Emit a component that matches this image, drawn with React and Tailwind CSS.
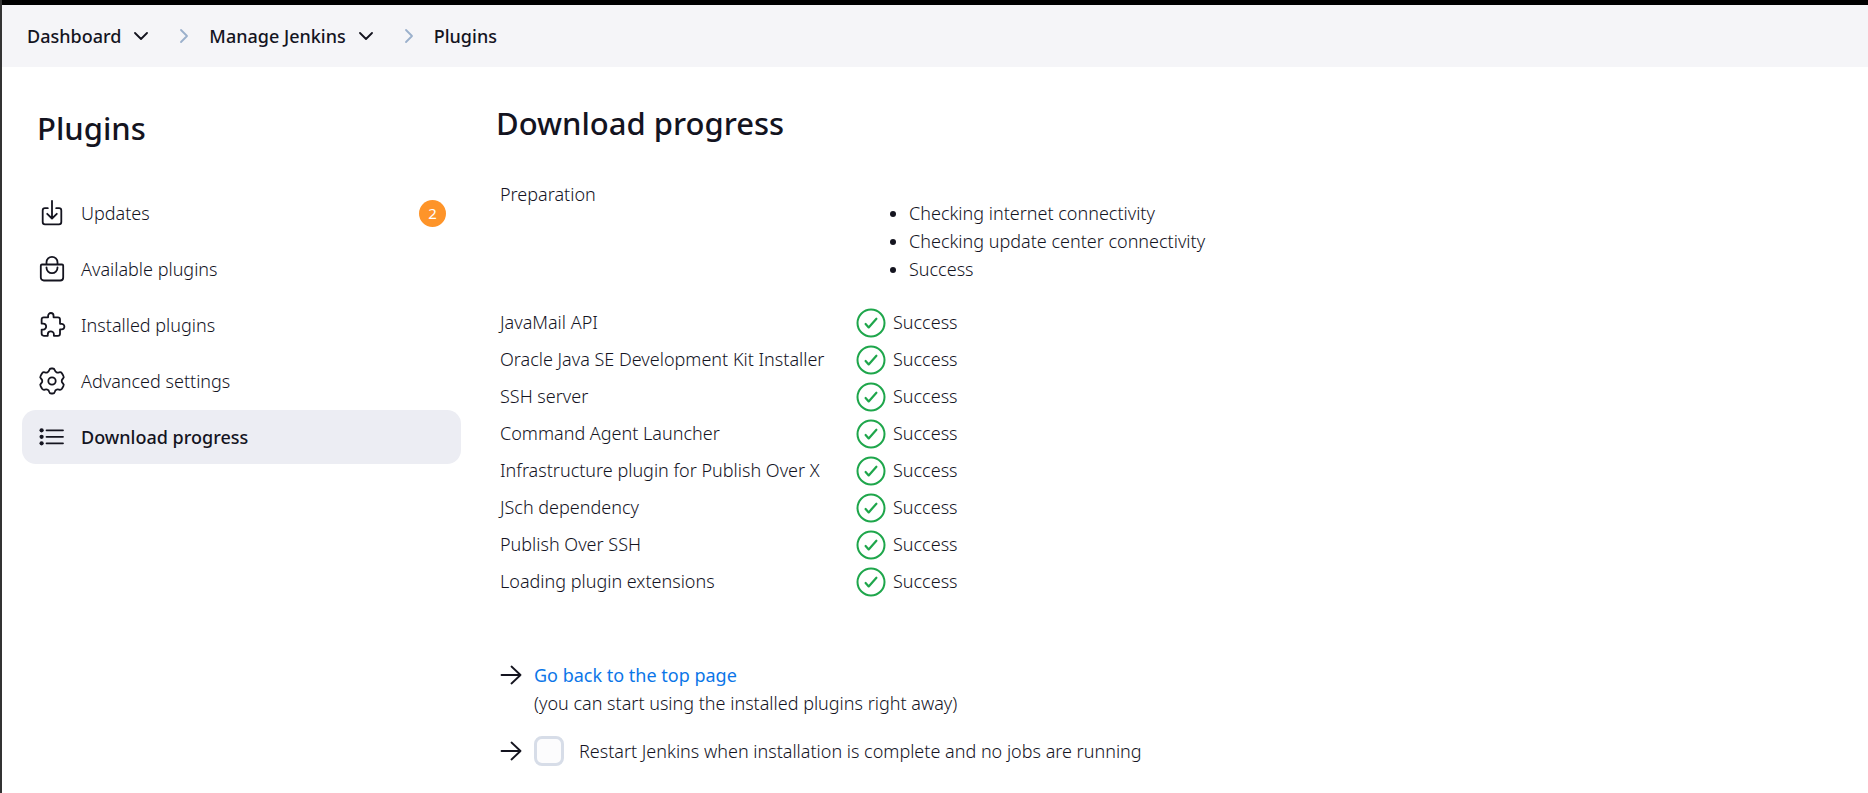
import React from "react";

const stroke = {
  fill: "none",
  stroke: "currentColor",
  strokeLinecap: "round",
  strokeLinejoin: "round",
};

const icons = {
  updates: (
    <path d="M18.200 9.200H21a2.300 2.300 0 012.300 2.300V23a2.300 2.300 0 01-2.300 2.300H7A2.300 2.300 0 014.700 23V11.500A2.300 2.300 0 017 9.200h2.800M9.200 14.800L14 19.500l4.800-4.700M14 1.800V19" />
  ),
  available: (
    <>
      <path d="M4 9.500H24a1.200 1.200 0 011.200 1.200V22.500a3 3 0 01-3 3H5.800a3 3 0 01-3-3V10.700A1.200 1.200 0 014 9.500zM8.500 9.500V7.300a5.500 5.500 0 0111 0V9.500" />
      <path d="M8.500 12.300v.4a5.500 5.500 0 0011 0v-.4" />
    </>
  ),
  installed: (
    <path
      transform="translate(1 -.6) scale(.0547)"
      strokeWidth={33}
      d="M413.660 246.100H386a2 2 0 01-2-2v-77.240A38.860 38.860 0 00345.140 128H267.900a2 2 0 01-2-2V98.340c0-27.140-21.500-49.860-48.640-50.330a49.530 49.530 0 00-50.400 49.510V126a2 2 0 01-2 2H87.620A39.740 39.740 0 0048 167.620V238a2 2 0 002 2h26.910c29.370 0 53.680 25.480 54.090 54.850.42 29.870-23.510 57.150-53.290 57.150H50a2 2 0 00-2 2v70.380A39.740 39.740 0 0087.620 464H158a2 2 0 002-2v-20.930c0-30.280 24.750-56.350 55-57.060 30.100-.7 57 20.310 57 50.280V462a2 2 0 002 2h71.140A38.860 38.860 0 00384 425.140v-78a2 2 0 012-2h28.480c27.630 0 49.520-22.670 49.520-50.400s-23.200-48.640-50.340-48.640z"
    />
  ),
  settings: (
    <>
      <circle cx="14" cy="14" r="3.700" />
      <path d="M11.300 3.100Q11.800 1.500 13.200 1.500H14.800Q16.200 1.500 16.700 3.100Q17.200 4.900 18.600 5.400Q19.600 5.800 21.200 5.300Q22.900 4.800 23.900 6.200L25.400 8.900Q26.300 10.300 25 11.500Q23.700 12.700 23.700 14T25 16.500Q26.300 17.700 25.400 19.100L23.900 21.800Q22.900 23.200 21.200 22.700Q19.600 22.200 18.600 22.600Q17.200 23.100 16.700 24.900Q16.200 26.500 14.800 26.500H13.200Q11.800 26.500 11.300 24.900Q10.800 23.100 9.400 22.600Q8.400 22.200 6.800 22.700Q5.100 23.200 4.100 21.800L2.600 19.100Q1.700 17.700 3 16.500Q4.300 15.300 4.300 14T3 11.500Q1.700 10.300 2.600 8.900L4.100 6.200Q5.100 4.800 6.800 5.300Q8.400 5.800 9.400 5.400Q10.800 4.900 11.300 3.100Z" />
    </>
  ),
  progress: (
    <>
      <path d="M8.500 7.300H25M8.500 13.800H25M8.500 20.300H25" />
      <g fill="currentColor" stroke="none">
        <circle cx="3.600" cy="7.300" r="2.100" />
        <circle cx="3.600" cy="13.800" r="2.100" />
        <circle cx="3.600" cy="20.300" r="2.100" />
      </g>
    </>
  ),
};

function Crumb({ label }) {
  return (
    <div className="flex items-center gap-[11px]">
      <a href="#" className="whitespace-nowrap">{label}</a>
      <button type="button" aria-label={`${label} menu`} className="flex w-[18px] justify-center">
        <svg viewBox="0 0 14 8" className="h-2 w-3.5" aria-hidden="true" {...stroke} strokeWidth={1.8}>
          <path d="M1 1l6 6 6-6" />
        </svg>
      </button>
    </div>
  );
}

function Separator() {
  return (
    <svg viewBox="0 0 10 16" className="mr-5 ml-[29px] h-4 w-2.5 text-[#9bb0cc]" aria-hidden="true" {...stroke} strokeWidth={1.8}>
      <path d="M2 2l6 6-6 6" />
    </svg>
  );
}

const navItems = [
  { label: "Updates", icon: "updates", badge: 2 },
  { label: "Available plugins", icon: "available" },
  { label: "Installed plugins", icon: "installed" },
  { label: "Advanced settings", icon: "settings" },
  { label: "Download progress", icon: "progress", active: true },
];

function NavItem({ label, icon, badge, active }) {
  return (
    <a
      href="#"
      aria-current={active ? "page" : undefined}
      className={
        "flex h-[54px] items-center gap-[15px] rounded-[14px] pr-[15px] pl-4 " +
        (active ? "bg-[#ecedf3] font-medium" : "")
      }
    >
      <svg viewBox="0 0 28 28" className="size-7" aria-hidden="true" {...stroke} strokeWidth={1.8}>
        {icons[icon]}
      </svg>
      <span className="flex-1">{label}</span>
      {badge && (
        <span className="flex size-[27px] items-center justify-center rounded-full bg-[#fe9429] text-[15px] font-normal text-white">
          {badge}
        </span>
      )}
    </a>
  );
}

const checks = ["Checking internet connectivity", "Checking update center connectivity", "Success"];

const jobs = [
  "JavaMail API",
  "Oracle Java SE Development Kit Installer",
  "SSH server",
  "Command Agent Launcher",
  "Infrastructure plugin for Publish Over X",
  "JSch dependency",
  "Publish Over SSH",
  "Loading plugin extensions",
];

function SuccessIcon() {
  return (
    <svg viewBox="0 0 30 30" className="mt-0.5 size-[30px] text-[#1ea64b]" aria-hidden="true" {...stroke} strokeWidth={2}>
      <circle cx="15" cy="15" r="13.500" />
      <path d="M9.600 16l3.100 3.400L20.400 10.700" strokeWidth={2.2} />
    </svg>
  );
}

function Arrow() {
  return (
    <svg viewBox="0 0 22 20" className="h-5 w-[22px] shrink-0" aria-hidden="true" {...stroke} strokeWidth={1.8}>
      <path d="M1.500 10h19M11.500 1.500L20.500 10l-9 8.500" />
    </svg>
  );
}

export default function App() {
  return (
    <div className="min-h-screen border-l-2 border-[#333] bg-white font-['Noto_Sans',sans-serif] text-[18px] leading-[28px] font-light text-[#14141f]">
      <div className="h-[5px] bg-black" />
      <nav aria-label="Breadcrumb" className="flex h-[62px] items-center bg-[#f5f5f8] px-[25px] font-medium">
        <Crumb label="Dashboard" />
        <Separator />
        <Crumb label="Manage Jenkins" />
        <Separator />
        <a href="#">Plugins</a>
      </nav>

      <div className="flex gap-[35px] pr-9 pl-5">
        <aside className="w-[439px] shrink-0 pt-10">
          <h1 className="px-[15px] text-[31px] leading-[42px] font-medium">Plugins</h1>
          <nav aria-label="Plugins" className="mt-[37px] flex flex-col gap-0.5">
            {navItems.map((item) => (
              <NavItem key={item.label} {...item} />
            ))}
          </nav>
        </aside>

        <main className="flex-1 pt-[35px]">
          <h2 className="text-[31px] leading-[42px] font-medium">Download progress</h2>
          <table className="mt-9">
            <tbody>
              <tr>
                <td className="w-[360px] pl-1 align-top">Preparation</td>
                <td>
                  <ul className="mt-[19px] mb-5 list-disc pl-[53px]">
                    {checks.map((check) => (
                      <li key={check}>{check}</li>
                    ))}
                  </ul>
                </td>
              </tr>
              {jobs.map((job) => (
                <tr key={job} className="h-[37px]">
                  <td className="pl-1">{job}</td>
                  <td>
                    <div className="flex items-center gap-[7px]">
                      <SuccessIcon />
                      Success
                    </div>
                  </td>
                </tr>
              ))}
            </tbody>
          </table>

          <div className="mt-[62px] flex gap-3 pl-1">
            <div className="flex h-7 items-center">
              <Arrow />
            </div>
            <div>
              <a href="#" className="font-normal text-[#0b76e8]">Go back to the top page</a>
              <p>(you can start using the installed plugins right away)</p>
            </div>
          </div>
          <div className="mt-[19px] flex items-center gap-3 pl-1">
            <Arrow />
            <label className="flex items-center gap-[15px]">
              <input
                type="checkbox"
                className="size-[30px] appearance-none rounded-[8px] border-[3px] border-[#d7dde8] bg-[#fcfcfd]"
              />
              Restart Jenkins when installation is complete and no jobs are running
            </label>
          </div>
        </main>
      </div>
    </div>
  );
}
